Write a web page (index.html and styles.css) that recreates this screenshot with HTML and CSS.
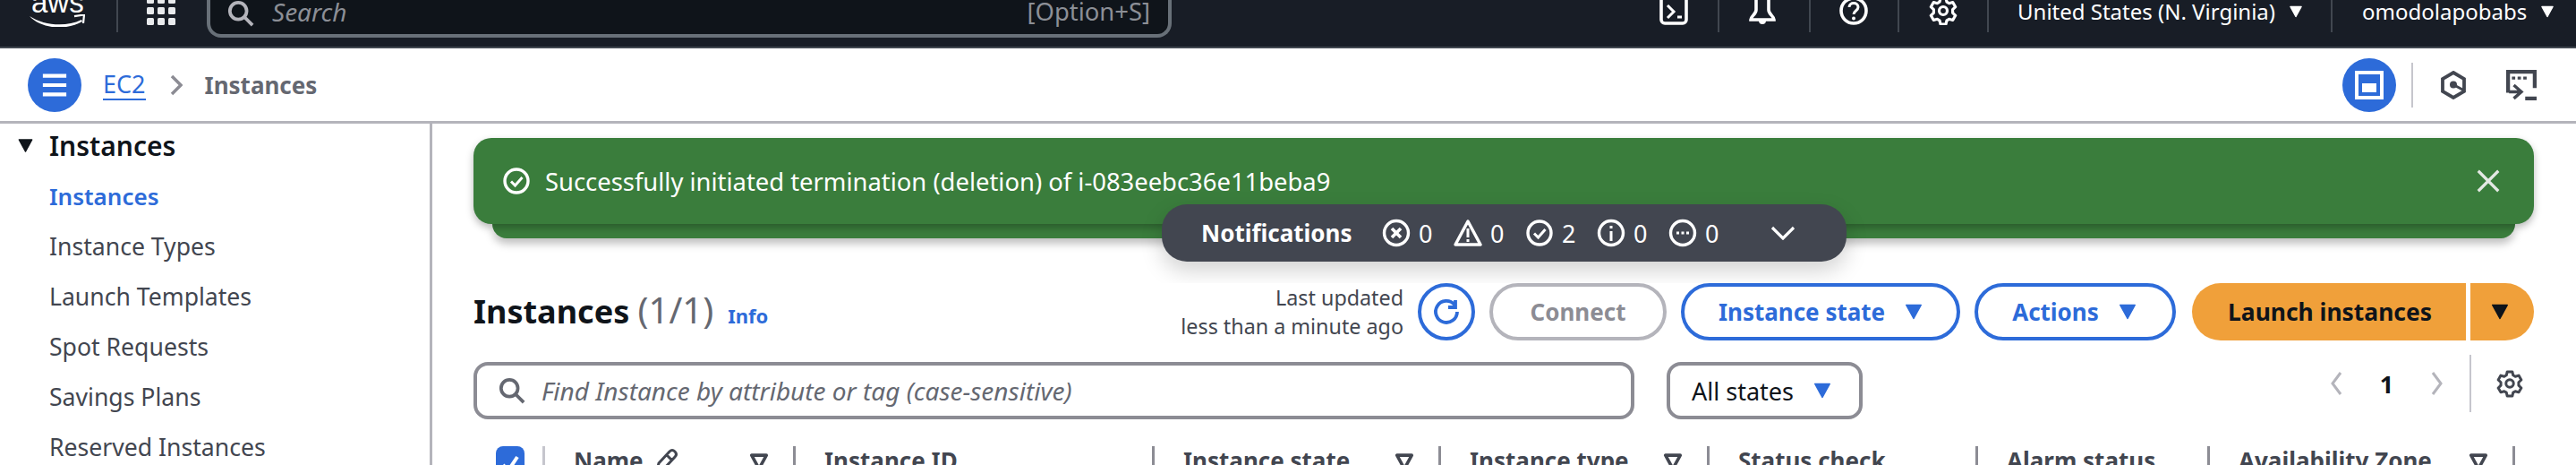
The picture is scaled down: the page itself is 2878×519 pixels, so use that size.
FILE: index.html
```html
<!DOCTYPE html>
<html lang="en">
<head>
<meta charset="utf-8">
<title>Instances | EC2</title>
<link rel="stylesheet" href="styles.css">
</head>
<body>
<svg class="defs" width="0" height="0" aria-hidden="true">
  <symbol id="i-search" viewBox="0 0 32 32"><circle cx="13" cy="13" r="10" fill="none" stroke="currentColor" stroke-width="4"/><path d="M20 20l10 10" fill="none" stroke="currentColor" stroke-width="4"/></symbol>
  <symbol id="i-caret" viewBox="0 0 16 16"><path d="M2.5 3h11L8 13z" fill="currentColor" stroke="currentColor" stroke-width="1" stroke-linejoin="round"/></symbol>
  <symbol id="i-ok" viewBox="0 0 32 32"><circle cx="16" cy="16" r="13" fill="none" stroke="currentColor" stroke-width="3.4"/><path d="M10 16.5l4.5 4.5 8-9" fill="none" stroke="currentColor" stroke-width="3"/></symbol>
  <symbol id="i-gear" viewBox="0 0 32 32"><g fill="none" stroke="currentColor" stroke-width="3.2" stroke-linejoin="round"><path d="M13 2h6l1 4.2 2.6 1.5 4.1-1.2 3 5.2-3.1 3v3.600l3.100 3-3 5.200-4.100-1.200-2.600 1.500-1 4.200h-6l-1-4.200-2.600-1.500-4.100 1.200-3-5.200 3.100-3v-3.600l-3.100-3 3-5.200 4.100 1.200 2.600-1.500z"/><circle cx="16" cy="16" r="4.500"/></g></symbol>
  <symbol id="i-filter" viewBox="0 0 16 16"><path d="M2 3h12L8 14z" fill="none" stroke="currentColor" stroke-width="2.600" stroke-linejoin="round"/></symbol>
</svg>

<header class="topbar">
  <div class="aws-logo">
    <span class="aws-text">aws</span>
    <svg class="aws-smile" viewBox="0 0 62 14"><path d="M0 2C15 12 40 15 58 6L59 8C42 18 14 17 0 2z" fill="#fff"/><path d="M50 2.200L61 .5 60 10" fill="none" stroke="#fff" stroke-width="2.200"/></svg>
  </div>
  <span class="top-div top-div-logo"></span>
  <svg class="grid-icon" viewBox="0 0 32 32"><g fill="#e9ebed"><rect x="0" y="0" width="8" height="8" rx="1.500"/><rect x="12" y="0" width="8" height="8" rx="1.500"/><rect x="24" y="0" width="8" height="8" rx="1.500"/><rect x="0" y="12" width="8" height="8" rx="1.500"/><rect x="12" y="12" width="8" height="8" rx="1.500"/><rect x="24" y="12" width="8" height="8" rx="1.500"/><rect x="0" y="24" width="8" height="8" rx="1.500"/><rect x="12" y="24" width="8" height="8" rx="1.500"/><rect x="24" y="24" width="8" height="8" rx="1.500"/></g></svg>
  <div class="global-search">
    <svg class="gs-icon"><use href="#i-search"/></svg>
    <span class="gs-text">Search</span>
    <span class="gs-key">[Option+S]</span>
  </div>
  <div class="top-tools">
    <span class="tool tool-a">
      <svg class="top-icon" viewBox="0 0 32 32"><rect x="2" y="-12" width="28" height="42" rx="4" fill="none" stroke="#fff" stroke-width="3.600"/><path d="M9 10l7 7-7 7" fill="none" stroke="#fff" stroke-width="3"/><path d="M20 23h5" stroke="#fff" stroke-width="3"/></svg>
    </span>
    <span class="top-div"></span>
    <span class="tool tool-b">
      <svg class="top-icon" viewBox="0 0 32 32"><path d="M9 0v15c0 5-6 7-6 11h26c0-4-6-6-6-11V0" fill="none" stroke="#fff" stroke-width="3.600"/><path d="M12 27a4 4 0 0 0 8 0z" fill="#fff"/></svg>
    </span>
    <span class="top-div"></span>
    <span class="tool tool-c">
      <svg class="top-icon" viewBox="0 0 32 32"><circle cx="16" cy="16" r="14" fill="none" stroke="#fff" stroke-width="3.600"/><path d="M11 12c0-6 10-6 10 0 0 4-5 4-5 8" fill="none" stroke="#fff" stroke-width="3"/><circle cx="16" cy="24.500" r="2" fill="#fff"/></svg>
    </span>
    <span class="top-div"></span>
    <span class="tool tool-d">
      <svg class="top-icon"><use href="#i-gear"/></svg>
    </span>
    <span class="top-div"></span>
    <span class="top-menu top-menu-region">United States (N. Virginia)<svg class="top-caret"><use href="#i-caret"/></svg></span>
    <span class="top-div"></span>
    <span class="top-menu top-menu-user">omodolapobabs<svg class="top-caret"><use href="#i-caret"/></svg></span>
  </div>
</header>

<nav class="subbar">
  <span class="round-btn">
    <svg class="round-icon" viewBox="0 0 32 32"><path d="M2 5h28M2 16h28M2 27h28" stroke="#fff" stroke-width="4.500"/></svg>
  </span>
  <a class="crumb-link" href="#">EC2</a>
  <svg class="crumb-sep" viewBox="0 0 14 24"><path d="M2 2l10 10L2 22" fill="none" stroke="#8c8c94" stroke-width="3.500"/></svg>
  <span class="crumb-current">Instances</span>
  <span class="round-btn round-btn-right">
    <svg class="round-icon-b" viewBox="0 0 32 32"><rect x="2" y="2" width="28" height="28" fill="none" stroke="#fff" stroke-width="4"/><rect x="8" y="14" width="16" height="10" fill="#fff"/></svg>
  </span>
  <span class="sub-div"></span>
  <svg class="hex-icon" viewBox="0 0 28 32"><path d="M14 2l12 7v14l-12 7-12-7V9z" fill="none" stroke="#424650" stroke-width="3.800"/><circle cx="14" cy="15.500" r="4" fill="#424650"/><path d="M14 15.500L26 22" stroke="#424650" stroke-width="3"/></svg>
  <svg class="term-icon" viewBox="0 0 32 32"><path d="M2 24V2h28v17" fill="none" stroke="#424650" stroke-width="4"/><path d="M6 7h3.500v3H6zM12 7h3.500v3H12zM18 7h3.500v3H18z" fill="#424650"/><path d="M8 16l8 7-8 7M3 23h12" fill="none" stroke="#424650" stroke-width="3.200"/><path d="M20 28h12v4H20z" fill="#424650"/></svg>
</nav>

<div class="layout">
  <aside class="sidebar">
    <div class="side-head"><svg class="side-caret"><use href="#i-caret"/></svg><span>Instances</span></div>
    <ul class="side-list">
      <li class="side-item side-active">Instances</li>
      <li class="side-item">Instance Types</li>
      <li class="side-item">Launch Templates</li>
      <li class="side-item">Spot Requests</li>
      <li class="side-item">Savings Plans</li>
      <li class="side-item">Reserved Instances</li>
    </ul>
  </aside>

  <main class="content">
    <section class="flash-stack">
      <div class="flash">
        <svg class="flash-icon"><use href="#i-ok"/></svg>
        <span class="flash-text">Successfully initiated termination (deletion) of i-083eebc36e11beba9</span>
        <svg class="flash-close" viewBox="0 0 32 32"><path d="M4 4l24 24M28 4L4 28" fill="none" stroke="#e4e8e4" stroke-width="3.400"/></svg>
      </div>
      <div class="flash-back"></div>
      <div class="notif">
        <span class="notif-title">Notifications</span>
        <span class="notif-stat">
          <svg class="notif-icon" viewBox="0 0 32 32"><circle cx="16" cy="16" r="13.500" fill="none" stroke="#fff" stroke-width="3.400"/><path d="M11 11l10 10M21 11L11 21" stroke="#fff" stroke-width="3.600"/></svg>0
        </span>
        <span class="notif-stat">
          <svg class="notif-icon" viewBox="0 0 32 32"><path d="M16 3L30 29H2z" fill="none" stroke="#fff" stroke-width="3.400" stroke-linejoin="round"/><path d="M16 11v10M16 23v3" stroke="#fff" stroke-width="3"/></svg>0
        </span>
        <span class="notif-stat">
          <svg class="notif-icon"><use href="#i-ok"/></svg>2
        </span>
        <span class="notif-stat">
          <svg class="notif-icon" viewBox="0 0 32 32"><circle cx="16" cy="16" r="13.500" fill="none" stroke="#fff" stroke-width="3.400"/><path d="M16 8v3M16 14v11" stroke="#fff" stroke-width="3"/></svg>0
        </span>
        <span class="notif-stat">
          <svg class="notif-icon" viewBox="0 0 32 32"><circle cx="16" cy="16" r="13.500" fill="none" stroke="#fff" stroke-width="3.400"/><path d="M9 16h3M14.500 16h3M20 16h3" stroke="#fff" stroke-width="3"/></svg>0
        </span>
        <svg class="notif-chev" viewBox="0 0 28 16"><path d="M2 2l12 12L26 2" fill="none" stroke="#fff" stroke-width="3.200"/></svg>
      </div>
    </section>

    <section class="page-head">
      <h1 class="title">Instances <span class="title-count">(1/1)</span><a class="info" href="#">Info</a></h1>
      <div class="updated">Last updated<br>less than a minute ago</div>
      <span class="refresh">
        <svg class="refresh-icon" viewBox="0 0 32 32"><path d="M25 8A12 12 0 1 0 28 16" fill="none" stroke="#2d6bd9" stroke-width="3.800"/><path d="M26 3v8h-8" fill="none" stroke="#2d6bd9" stroke-width="3.800"/></svg>
      </span>
      <span class="btn btn-disabled">Connect</span>
      <span class="btn btn-outline btn-state">Instance state<svg class="btn-caret"><use href="#i-caret"/></svg></span>
      <span class="btn btn-outline btn-actions">Actions<svg class="btn-caret"><use href="#i-caret"/></svg></span>
      <span class="split">
        <span class="split-main">Launch instances</span>
        <span class="split-drop"><svg class="btn-caret"><use href="#i-caret"/></svg></span>
      </span>
    </section>

    <section class="filters">
      <div class="find">
        <svg class="find-icon"><use href="#i-search"/></svg>
        <span class="find-text">Find Instance by attribute or tag (case-sensitive)</span>
      </div>
      <div class="select">All states<svg class="btn-caret"><use href="#i-caret"/></svg></div>
      <div class="pager">
        <svg class="pager-chev" viewBox="0 0 14 28"><path d="M12 2L3 14l9 12" fill="none" stroke="#b4b4bb" stroke-width="3"/></svg>
        <span class="pager-num">1</span>
        <svg class="pager-chev" viewBox="0 0 14 28"><path d="M2 2l9 12-9 12" fill="none" stroke="#b4b4bb" stroke-width="3"/></svg>
        <span class="pager-div"></span>
        <svg class="pager-gear"><use href="#i-gear"/></svg>
      </div>
    </section>

    <section class="thead">
      <div class="th th-check"><span class="check"><svg class="check-mark" viewBox="0 0 32 32"><path d="M8 17l6 6L24 8" fill="none" stroke="#fff" stroke-width="4"/></svg></span></div>
      <div class="th th-name">Name<svg class="th-pencil" viewBox="0 0 28 28"><path d="M3 25l2-8L17 4c2-2 4-2 6 0s2 4 0 6L11 23zM14 8l6 6" fill="none" stroke="#424650" stroke-width="3"/></svg><svg class="th-filter"><use href="#i-filter"/></svg></div>
      <div class="th th-id">Instance ID</div>
      <div class="th th-st">Instance state<svg class="th-filter"><use href="#i-filter"/></svg></div>
      <div class="th th-ty">Instance type<svg class="th-filter"><use href="#i-filter"/></svg></div>
      <div class="th th-sc">Status check</div>
      <div class="th th-al">Alarm status</div>
      <div class="th th-az">Availability Zone<svg class="th-filter"><use href="#i-filter"/></svg></div>
      <div class="th th-end"></div>
    </section>
  </main>
</div>
</body>
</html>
```

FILE: styles.css
```css
* { box-sizing: border-box; }
html, body { margin: 0; padding: 0; height: 519px; overflow: hidden; background: #fff; }
body { font-family: "Noto Sans", "Open Sans", sans-serif; font-size: 27px; color: #424650; }
.defs { position: absolute; }
a { color: #2d6bd9; text-decoration: none; }

/* top bar */
.topbar { display: flex; align-items: flex-end; height: 54px; padding-left: 33px; background: #181d26; border-bottom: 2px solid #414750; color: #fff; }
.aws-logo { width: 62px; margin-bottom: 22px; display: flex; flex-direction: column; flex: none; }
.aws-text { padding-left: 2px; font: 400 33px/33px "Liberation Sans", sans-serif; color: #fff; }
.aws-smile { width: 62px; height: 14px; margin-top: -3px; }
.top-div { width: 2px; height: 36px; background: #414750; margin-bottom: 16px; flex: none; }
.top-div-logo { margin-left: 35px; }
.grid-icon { width: 32px; height: 32px; margin: 0 35px 24px 32px; flex: none; }
.global-search { width: 1078px; height: 60px; flex: none; margin-bottom: 10px; display: flex; align-items: flex-end; padding: 0 20px 8px 19px; background: #0f141a; border: 4px solid #687078; border-top: 0; border-radius: 0 0 16px 16px; }
.gs-icon { width: 30px; height: 30px; margin-right: 20px; color: #b4b4bb; flex: none; }
.gs-text { font-style: italic; color: #8c8f96; font-size: 28px; line-height: 30px; margin-bottom: 2px; }
.gs-key { margin-left: auto; color: #8c8f96; font-size: 27.4px; line-height: 30px; margin-bottom: 2px; }
.top-tools { display: flex; align-items: flex-end; margin-left: 545px; flex: none; }
.tool { display: block; width: 32px; height: 32px; margin-bottom: 24px; flex: none; }
.top-icon { display: block; width: 32px; height: 32px; color: #fff; }
.tool-a { margin-right: 33px; }
.tool-b { margin: 0 36px 24px 32px; }
.tool-c { margin: 0 33px 24px 32px; }
.tool-d { margin: 0 33px 24px 33px; }
.top-menu { display: flex; align-items: center; height: 30px; margin-bottom: 24px; font-size: 24px; line-height: 30px; color: #fff; white-space: nowrap; }
.top-menu-region { padding-left: 32px; width: 382px; }
.top-menu-user { padding-left: 33px; }
.top-caret { width: 18px; height: 18px; margin-left: 14px; color: #fff; flex: none; }

/* breadcrumb bar */
.subbar { display: flex; align-items: center; height: 84px; padding: 0 44px 0 31px; border-bottom: 3px solid #b4b4bb; background: #fff; }
.round-btn { width: 60px; height: 60px; border-radius: 50%; background: #2d6bd9; display: flex; align-items: center; justify-content: center; flex: none; }
.round-icon { width: 30px; height: 30px; }
.round-icon-b { width: 32px; height: 32px; }
.round-btn-right { margin-left: auto; }
.crumb-link { margin-left: 24px; font-size: 27px; border-bottom: 2px solid #2d6bd9; line-height: 32px; }
.crumb-sep { width: 14px; height: 24px; margin: 0 25px 0 27px; }
.crumb-current { font-weight: 700; color: #656871; font-size: 26px; }
.sub-div { width: 2px; height: 50px; margin: 0 31px 0 17px; background: #c6c6cd; flex: none; }
.hex-icon { width: 28px; height: 32px; margin-right: 45px; flex: none; }
.term-icon { width: 34px; height: 34px; flex: none; }

/* layout */
.layout { display: flex; height: 381px; }
.sidebar { width: 483px; flex: none; border-right: 3px solid #b4b4bb; padding: 6px 0 0 18px; }
.side-head { display: flex; align-items: center; height: 36px; font-size: 30px; font-weight: 600; color: #0f141a; }
.side-caret { width: 21px; height: 21px; color: #0f141a; margin-right: 16px; flex: none; }
.side-list { list-style: none; margin: 0; padding: 0 0 0 37px; }
.side-item { height: 56px; display: flex; align-items: center; font-size: 26.6px; color: #424650; white-space: nowrap; }
.side-active { color: #2d6bd9; font-weight: 600; font-size: 26px; margin-top: 11px; }

/* main */
.content { flex: 1; min-width: 0; padding: 16px 47px 0 46px; }
.flash-stack { position: relative; }
.flash { position: relative; z-index: 1; height: 96px; display: flex; align-items: center; padding: 0 36px 0 32px; background: #3a7d3c; color: #fff; border-radius: 20px; box-shadow: 0 4px 8px rgba(0,0,0,.28); }
.flash-icon { width: 32px; height: 32px; margin-right: 16px; flex: none; color: #fff; }
.flash-text { font-size: 27.4px; white-space: nowrap; }
.flash-close { width: 30px; height: 30px; margin-left: auto; }
.flash-back { height: 16px; margin: 0 21px; background: #3a7d3c; border-radius: 0 0 20px 20px; box-shadow: 0 6px 10px rgba(0,0,0,.25); }
.notif { position: absolute; z-index: 2; left: 769px; top: 74px; width: 765px; height: 64px; display: flex; align-items: center; padding: 0 44px; background: #424650; border-radius: 28px; color: #fff; box-shadow: 0 10px 24px rgba(0,0,0,.18); }
.notif-title { font-weight: 700; font-size: 26px; width: 202px; flex: none; }
.notif-stat { display: flex; align-items: center; width: 80px; flex: none; font-size: 27px; gap: 9px; }
.notif-icon { width: 32px; height: 32px; color: #fff; flex: none; }
.notif-chev { width: 28px; height: 16px; margin-left: 34px; flex: none; }

.page-head { position: relative; z-index: 3; display: flex; align-items: center; gap: 16px; height: 64px; margin-top: 50px; background: #fff; }
.title { margin: 0 auto 0 0; padding-top: 2px; font-size: 36px; line-height: 62px; font-weight: 700; color: #0f141a; white-space: nowrap; }
.title-count { font-weight: 400; color: #656871; font-size: 40px; }
.info { font-size: 22px; font-weight: 700; margin-left: 16px; }
.updated { font-size: 23.3px; line-height: 32px; text-align: right; color: #424650; white-space: nowrap; }
.refresh { width: 64px; height: 64px; border: 4px solid #2d6bd9; border-radius: 50%; display: flex; align-items: center; justify-content: center; flex: none; }
.refresh-icon { width: 32px; height: 32px; }
.btn { height: 64px; border-radius: 32px; display: flex; align-items: center; justify-content: center; font-size: 26px; font-weight: 700; white-space: nowrap; flex: none; }
.btn-disabled { width: 198px; border: 4px solid #b4b4bb; color: #8c8c94; }
.btn-outline { border: 4px solid #2d6bd9; color: #2d6bd9; }
.btn-state { width: 312px; padding-left: 2px; }
.btn-actions { width: 225px; }
.btn-caret { width: 24px; height: 24px; margin-left: 20px; color: #2d6bd9; flex: none; }
.split { display: flex; gap: 5px; flex: none; margin-left: 2px; }
.split-main { width: 306px; height: 64px; display: flex; align-items: center; justify-content: center; background: #f0a03a; border-radius: 32px 0 0 32px; color: #0f141a; font-size: 26.4px; font-weight: 700; padding-left: 2px; }
.split-drop { width: 71px; height: 64px; display: flex; align-items: center; justify-content: center; background: #f0a03a; border-radius: 0 32px 32px 0; }
.split-drop .btn-caret { color: #0f141a; margin: 0 6px 0 0; }

.filters { position: relative; z-index: 3; display: flex; align-items: flex-start; margin-top: 24px; height: 64px; }
.find { width: 1297px; height: 64px; flex: none; display: flex; align-items: center; padding-left: 24px; border: 4px solid #8c8c94; border-radius: 16px; }
.find-icon { width: 30px; height: 30px; margin-right: 18px; color: #656871; flex: none; }
.find-text { font-style: italic; font-size: 28px; color: #656871; white-space: nowrap; }
.select { width: 219px; height: 64px; margin-left: 36px; display: flex; align-items: center; padding-left: 24px; border: 4px solid #8c8c94; border-radius: 16px; color: #0f141a; flex: none; font-size: 27px; }
.select .btn-caret { margin-left: 20px; }
.pager { display: flex; align-items: center; height: 64px; margin: -8px 0 0 auto; }
.pager-chev { width: 14px; height: 28px; flex: none; }
.pager-num { width: 99px; text-align: center; font-weight: 700; font-size: 27px; color: #0f141a; }
.pager-div { width: 2px; height: 64px; background: #c6c6cd; margin: 0 28px 0 29px; }
.pager-gear { width: 30px; height: 32px; color: #424650; margin-right: 12px; }

.thead { display: grid; grid-template-columns: 77px 280px 401px 320px 300px 300px 259px 341px 24px; margin-top: 30px; height: 60px; }
.th { display: flex; align-items: flex-start; height: 60px; padding: 3px 0 0 32px; border-left: 3px solid #8c8c94; font-size: 26px; line-height: 26px; font-weight: 700; color: #424650; white-space: nowrap; }
.th-check { border-left: 0; padding: 0 0 0 25px; }
.th-name { border-left-color: #c6c6cd; }
.check { display: flex; width: 32px; height: 40px; background: #2d6bd9; border-radius: 8px; }
.check-mark { width: 32px; height: 32px; margin-top: 4px; }
.th-pencil { width: 28px; height: 28px; margin: -1px 0 0 12px; flex: none; }
.th-filter { width: 22px; height: 22px; margin: 3px 27px 0 auto; color: #424650; flex: none; }
.th-end { padding: 0; }
```
